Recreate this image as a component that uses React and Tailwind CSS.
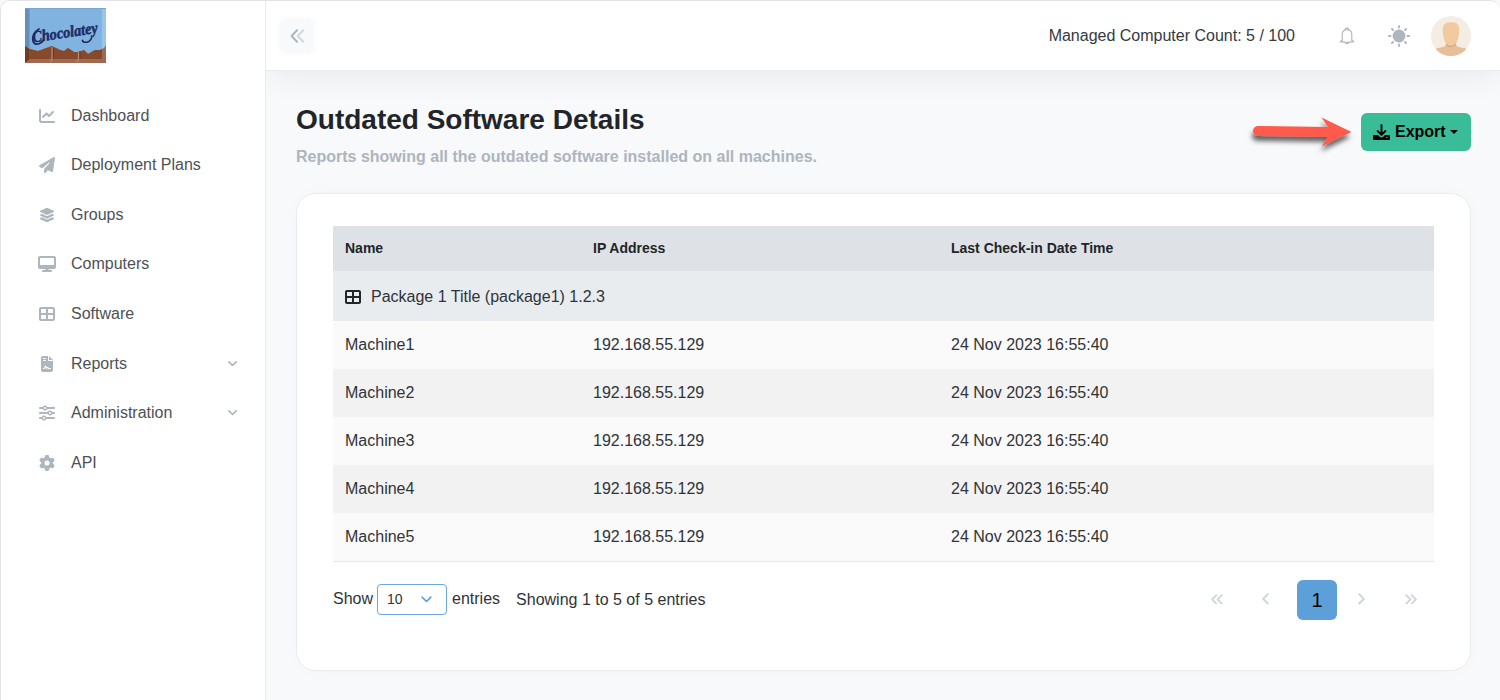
import React from "react";
import {
  FaChartLine,
  FaPaperPlane,
  FaLayerGroup,
  FaDesktop,
  FaTableCellsLarge,
  FaFileContract,
  FaSliders,
  FaGear,
} from "react-icons/fa6";

const navItems = [
  { label: "Dashboard", icon: FaChartLine },
  { label: "Deployment Plans", icon: FaPaperPlane },
  { label: "Groups", icon: FaLayerGroup },
  { label: "Computers", icon: FaDesktop },
  { label: "Software", icon: FaTableCellsLarge },
  { label: "Reports", icon: FaFileContract, expandable: true },
  { label: "Administration", icon: FaSliders, expandable: true },
  { label: "API", icon: FaGear },
];

const machines = ["Machine1", "Machine2", "Machine3", "Machine4", "Machine5"];

function Logo() {
  return (
    <svg width="82" height="56" viewBox="0 0 82 56" className="block overflow-visible">
      <rect width="81" height="55" fill="#80b3e0" />
      <rect width="4.500" height="43" fill="#648fb8" />
      <rect x="77" width="4" height="43" fill="#9ac4e8" />
      <rect width="81" height="1" fill="#75a6d2" />
      <path d="M0 38l5 3 8 2 14-5 8 4 4 1 4-3 6 4h5l5-2 4 4 7-4h5l4-2 2-3v18H0z" fill="#a06a50" />
      <path d="M0 38l4.500 3v10L0 55z" fill="#6f3a22" />
      <path d="M4.500 41l8.500 2 14-5 8 4 4 1 4-3 6 4h5l5-2 4 4 7-4h5l2-1v10H4.500z" fill="#87492c" />
      <path d="M27 39v12l-1.500 3M53.500 43v8l-1.500 3" stroke="#b48870" strokeWidth="1.300" fill="none" />
      <path d="M28.500 40v11M55 43v8" stroke="#6e371f" strokeWidth="1" />
      <text
        x="8"
        y="34.500"
        transform="rotate(-8.500 8 34.500)"
        textLength="66"
        lengthAdjust="spacingAndGlyphs"
        fill="#202b63"
        stroke="#202b63"
        strokeWidth="0.500"
        className="font-['Liberation_Serif',serif] text-[16px] font-bold italic"
      >
        Chocolatey
      </text>
      <path d="M66.500 30c-1 2.800-3 4.200-5.500 4.200-2 0-3.500-.7-3.500-1.800" fill="none" stroke="#202b63" strokeWidth="1.600" strokeLinecap="round" />
      <path d="M14 21c-4 2.500-6.500 7-6.200 11 .2 3.500 3.200 5 6.700 3.500 2-.8 3.500-2.300 4.500-4" fill="none" stroke="#202b63" strokeWidth="1.800" strokeLinecap="round" />
    </svg>
  );
}

function Chevron({ direction, width, thickness, className }) {
  const paths = {
    down: "M1.200 1.200L6 6l4.800-4.800",
    left: "M6 1.200L1.200 6 6 10.800",
    right: "M1.200 1.200L6 6 1.200 10.800",
    doubleLeft: "M6 1.200L1.200 6 6 10.800M12 1.200L7.200 6l4.800 4.800",
    doubleRight: "M1.200 1.200L6 6 1.200 10.800M7.200 1.200L12 6l-4.800 4.800",
  };
  const boxes = {
    down: [12, 7.2],
    left: [7.2, 12],
    right: [7.2, 12],
    doubleLeft: [13.2, 12],
    doubleRight: [13.2, 12],
  };
  const [w, h] = boxes[direction];
  return (
    <svg
      width={width}
      height={(width * h) / w}
      viewBox={`0 0 ${w} ${h}`}
      fill="none"
      stroke="currentColor"
      strokeWidth={thickness}
      strokeLinecap="round"
      strokeLinejoin="round"
      className={className}
    >
      <path d={paths[direction]} />
    </svg>
  );
}

function Bell() {
  return (
    <svg width="16" height="18" viewBox="0 0 16 18" fill="none" stroke="#adb5bd" strokeLinecap="round" strokeLinejoin="round">
      <path d="M6.200 2.600C6.200 1.600 7 1.100 8 1.100s1.800.500 1.800 1.500" strokeWidth="1.200" />
      <path d="M3.200 13.300V7.300C3.200 4.500 5 2.800 8 2.800s4.800 1.700 4.800 4.500v6" strokeWidth="1.100" />
      <path d="M3.200 13.100l-2 1.500c4 .8 9.600.8 13.600 0l-2-1.500" strokeWidth="1.100" />
      <path d="M6.500 16c.6.700 2.400.7 3 0" strokeWidth="1.200" />
    </svg>
  );
}

function Sun() {
  return (
    <svg width="24" height="24" viewBox="0 0 24 24" stroke="#adb5bd" strokeWidth="1.900" strokeLinecap="round">
      <circle cx="12" cy="12" r="6.400" fill="#adb5bd" stroke="none" />
      <path d="M12 1.900v1.600M12 20.500v1.600M1.900 12h1.600M20.500 12h1.600M5 5l1 1M18 18l1 1M5 19l1-1M18 6l1-1" />
    </svg>
  );
}

function Avatar() {
  return (
    <svg width="40" height="40" viewBox="0 0 40 40">
      <defs>
        <clipPath id="avatar-circle">
          <circle cx="20" cy="20" r="20" />
        </clipPath>
      </defs>
      <g clipPath="url(#avatar-circle)">
        <rect width="40" height="40" fill="#f5ede3" />
        <path d="M15 24h10v5c1.500 2.500 7 2.500 11 4v7H4v-7c4-1.500 9.500-1.500 11-4z" fill="#e6be98" />
        <path d="M15 26.500h10v2.500c-2.500 3-7.500 3-10 0z" fill="#d8ae86" />
        <path d="M11.800 13c0-5 3-6.800 8.200-6.800s8.200 1.800 8.200 6.800c0 4-.5 8.500-1.600 11.500-1.200 3.300-3.900 5-6.600 5s-5.400-1.700-6.600-5c-1.100-3-1.600-7.500-1.600-11.500z" fill="#f1ca9f" />
      </g>
    </svg>
  );
}

function Download() {
  return (
    <svg width="17" height="17" viewBox="0 0 17 17">
      <path d="M0.800 11h4.200l1.700 1.700c1 .9 2.600.9 3.600 0L12 11h4.200c.5 0 .8.3.8.8v3.400c0 .5-.3.8-.8.8H.8c-.5 0-.8-.3-.8-.8v-3.400c0-.5.3-.8.800-.8z" />
      <circle cx="14" cy="13.500" r=".8" fill="#38bd98" />
      <path d="M8.500 1v9.500M4.600 7l3.900 3.900L12.400 7" fill="none" stroke="#000" strokeWidth="1.900" strokeLinecap="round" strokeLinejoin="round" />
    </svg>
  );
}

function Arrow() {
  return (
    <svg width="108" height="44" viewBox="0 0 108 44" className="block overflow-visible">
      <defs>
        <filter id="arrow-shadow" x="-10%" y="-20%" width="120%" height="170%">
          <feDropShadow dx="-1" dy="5" stdDeviation="2.500" floodColor="#000" floodOpacity="0.600" />
        </filter>
      </defs>
      <path
        d="M9 13l70 1-6.500-9.500L102.500 19 72.500 33.500 79 24 9 23a5 5 0 0 1 0-10z"
        fill="#ff5a4c"
        filter="url(#arrow-shadow)"
      />
    </svg>
  );
}

function Sidebar() {
  return (
    <aside className="z-20 flex w-[265px] shrink-0 flex-col border-r border-[#e9ecef] bg-white">
      <div className="h-[89.800px] pl-6 pt-[7px]">
        <Logo />
      </div>
      <nav className="flex flex-col">
        {navItems.map(({ label, icon: Icon, expandable }) => (
          <a key={label} className="flex h-[49.600px] items-center pl-9 pr-7 text-[#4d5154]">
            <span className="flex w-5 justify-center text-[#adb5bd]">
              <Icon size={label === "Computers" ? 18 : 16} />
            </span>
            <span className="ml-[14px] flex-1 text-base">{label}</span>
            {expandable && <Chevron direction="down" width={9} thickness={2.2} className="text-[#adb5bd]" />}
          </a>
        ))}
      </nav>
    </aside>
  );
}

function Header() {
  return (
    <header className="z-10 flex h-[70px] shrink-0 items-center border-b border-[#e9ecef] bg-white pl-[14px] pr-[29px] shadow-[0_8px_30px_rgba(0,0,0,0.055)]">
      <button className="flex h-[34px] w-[34px] items-center justify-center rounded-md bg-[#f8f9fb] shadow-[0_0_5px_2px_#fafbfc]">
        <svg width="15" height="14" viewBox="0 0 15 14" fill="none" strokeWidth="2" strokeLinecap="round" strokeLinejoin="round">
          <path d="M7 1.200L1.600 7 7 12.800" stroke="#adb5bd" />
          <path d="M13.200 1.200L7.800 7l5.400 5.800" stroke="#d3d8dc" />
        </svg>
      </button>
      <span className="ml-auto text-base text-[#343a40]">Managed Computer Count: 5 / 100</span>
      <span className="ml-11">
        <Bell />
      </span>
      <span className="ml-8">
        <Sun />
      </span>
      <span className="ml-5">
        <Avatar />
      </span>
    </header>
  );
}

function MachineTable() {
  return (
    <table className="w-full table-fixed border-collapse text-left text-[#2f3438]">
      <colgroup>
        <col className="w-[248px]" />
        <col className="w-[358px]" />
        <col />
      </colgroup>
      <thead>
        <tr className="h-[45px] bg-[#dee2e6] text-sm text-[#212529]">
          <th className="px-3 pb-[2px] pt-0">Name</th>
          <th className="px-3 pb-[2px] pt-0">IP Address</th>
          <th className="px-3 pb-[2px] pt-0">Last Check-in Date Time</th>
        </tr>
      </thead>
      <tbody>
        <tr className="h-[50px] bg-[#e9ecef]">
          <td colSpan={3} className="px-3 pb-0 pt-px">
            <span className="flex items-center gap-[10px]">
              <FaTableCellsLarge size={16} className="text-[#212529]" />
              Package 1 Title (package1) 1.2.3
            </span>
          </td>
        </tr>
        {machines.map((name) => (
          <tr key={name} className="h-12 odd:bg-[#f2f2f2] even:bg-[#fafafa]">
            <td className="px-3 py-0">{name}</td>
            <td className="px-3 py-0">192.168.55.129</td>
            <td className="px-3 py-0">24 Nov 2023 16:55:40</td>
          </tr>
        ))}
      </tbody>
    </table>
  );
}

function TableFooter() {
  return (
    <div className="flex h-10 items-center text-base text-[#2f3438]">
      <span className="pb-[3px]">Show</span>
      <button className="mb-[2px] ml-1 flex h-[31px] w-[70px] items-center rounded border border-[#6aa8dd] pl-[9px] text-sm">
        10
        <Chevron direction="down" width={11} thickness={1.7} className="ml-[18px] mt-px text-[#5c9fd9]" />
      </button>
      <span className="ml-[5px] pb-[3px]">entries</span>
      <span className="ml-4">Showing 1 to 5 of 5 entries</span>
      <div className="ml-auto flex items-center pr-[17px] text-[#ced4da]">
        <Chevron direction="doubleLeft" width={12} thickness={2} className="mb-[2px]" />
        <Chevron direction="left" width={7} thickness={2} className="mb-[2px] ml-[39px]" />
        <span className="ml-7 flex h-10 w-10 items-center justify-center rounded-md bg-[#5c9fd9] text-xl text-black">1</span>
        <Chevron direction="right" width={7} thickness={2} className="mb-[2px] ml-[21px]" />
        <Chevron direction="doubleRight" width={12} thickness={2} className="mb-[2px] ml-[40px]" />
      </div>
    </div>
  );
}

export default function App() {
  return (
    <div className="h-[700px] w-[1500px] overflow-hidden bg-[#f8f9fb] font-['Liberation_Sans',Arial,sans-serif]">
      <div className="flex h-full overflow-hidden rounded-t-[10px] border-l border-t border-[#e4e4e6]">
        <Sidebar />
        <div className="flex min-w-0 flex-1 flex-col">
          <Header />
          <main className="flex flex-col pl-[30px] pr-[29px]">
            <div className="flex h-[122px] items-start pt-8">
              <div>
                <h1 className="text-[28px] font-bold leading-[34px] text-[#212529]">Outdated Software Details</h1>
                <p className="mt-[10px] text-base font-bold leading-5 text-[#adb5bd]">
                  Reports showing all the outdated software installed on all machines.
                </p>
              </div>
              <div className="ml-auto mt-[10px] flex items-start">
                <div className="mr-1">
                  <Arrow />
                </div>
                <button className="flex h-[38px] w-[110px] items-center rounded-md bg-[#38bd98] pl-3 text-base font-bold text-black">
                  <Download />
                  <span className="ml-[5px]">Export</span>
                  <span className="ml-1 h-0 w-0 border-x-[4px] border-t-[4px] border-x-transparent border-t-black" />
                </button>
              </div>
            </div>
            <section className="h-[478px] rounded-[20px] border border-[#e9ecef] bg-white px-9 pt-8 shadow-[0_0_20px_rgba(0,0,0,0.02)]">
              <div className="border-b border-[#e4e7e9]">
                <MachineTable />
              </div>
              <div className="mt-[18px]">
                <TableFooter />
              </div>
            </section>
          </main>
        </div>
      </div>
    </div>
  );
}
